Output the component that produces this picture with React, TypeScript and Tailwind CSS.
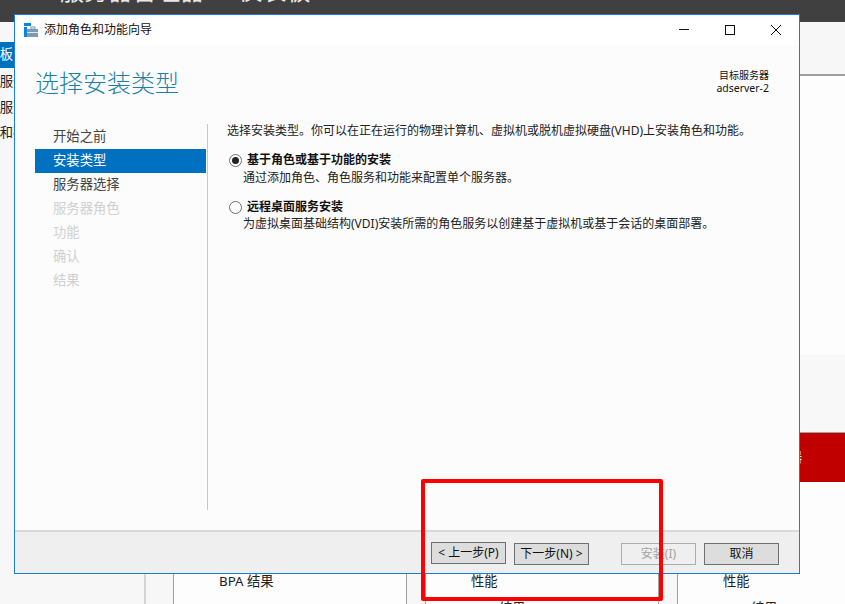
const font = "font-['Noto_Sans','Noto_Sans_CJK_SC',sans-serif]";

const steps = [
  { label: "开始之前", state: "done" },
  { label: "安装类型", state: "active" },
  { label: "服务器选择", state: "done" },
  { label: "服务器角色", state: "off" },
  { label: "功能", state: "off" },
  { label: "确认", state: "off" },
  { label: "结果", state: "off" },
];

function Radio({ checked }: { checked?: boolean }) {
  return (
    <span className="flex h-[13px] w-[13px] shrink-0 items-center justify-center rounded-full border border-[#6d6d6d] bg-white">
      {checked && <span className="h-[7px] w-[7px] rounded-full bg-[#222]" />}
    </span>
  );
}

function WizardButton({ label, disabled }: { label: string; disabled?: boolean }) {
  return (
    <button
      className={
        disabled
          ? "h-[22px] w-[75px] border border-[#adadad] bg-[#efefef] text-xs leading-none text-[#a3a3a3]"
          : "h-[22px] w-[75px] border border-[#707070] bg-[#dddddd] text-xs leading-none text-[#111]"
      }
    >
      {label}
    </button>
  );
}

function Tile({ title, rows }: { title: string; rows: string[] }) {
  return (
    <div className="h-[60px] w-[234px] shrink-0 border-x border-[#a0a0a0] bg-[#fdfdfd] pl-[45px] text-[13.33px] leading-5 text-[#222]">
      <div className="-mt-[2px]">{title}</div>
      {rows.map((r) => (
        <div key={r} className="mt-[7px]">
          {r}
        </div>
      ))}
    </div>
  );
}

function Background() {
  return (
    <div className="flex h-full flex-col">
      {/* Server Manager title bar, mostly scrolled off */}
      <div className="h-[22px] shrink-0 overflow-hidden bg-[#404040] pl-[60px] text-2xl leading-6 text-[#e8e8e8]">
        <div className="-mt-[21px] flex gap-[14px] whitespace-nowrap">
          <span>服务器管理器</span>
          <span>·</span>
          <span>仪表板</span>
        </div>
      </div>
      <div className="flex flex-1 overflow-hidden">
        {/* Left nav */}
        <div className="w-[146px] shrink-0 border-r-2 border-[#d4d4d4] bg-[#f7f7f7] pt-5 text-[13.33px] text-[#222]">
          <div className="flex h-[26px] items-center bg-[#0070c0] text-white">
            <span className="-ml-[27px] whitespace-nowrap">仪表板</span>
          </div>
          <div className="flex h-[27px] items-center"><span className="-ml-[27px] whitespace-nowrap">本地服务器</span></div>
          <div className="flex h-[25px] items-center"><span className="-ml-[27px] whitespace-nowrap">所有服务器</span></div>
          <div className="flex h-[25px] items-center"><span className="-ml-[27px] whitespace-nowrap">文件和存储服务</span></div>
        </div>
        {/* Dashboard body */}
        <div className="flex min-w-0 flex-1 flex-col bg-[#fdfdfd]">
          <div className="h-[54px] shrink-0 border-b-2 border-[#a0a0a0] bg-[#f7f7f7]" />
          <div className="h-[279px] shrink-0" />
          <div className="h-[78px] shrink-0 border-b border-[#a0a0a0] bg-[#f8f8f8]" />
          <div className="ml-[531px] flex h-[49px] shrink-0 items-center overflow-hidden bg-[#c00000] pl-[85px] text-[13.33px] text-white">
            <span className="whitespace-nowrap">服务器</span>
          </div>
          <div className="h-[91px] shrink-0" />
          <div className="flex flex-1 gap-[18px] bg-[#f7f7f7] pl-[27px]">
            <Tile title="BPA 结果" rows={[]} />
            <Tile title="性能" rows={["BPA 结果"]} />
            <Tile title="性能" rows={["BPA 结果"]} />
          </div>
        </div>
      </div>
    </div>
  );
}

function WizardWindow() {
  return (
    <div className="absolute left-[14px] top-[14px] flex h-[560px] w-[786px] flex-col border border-[#1a7fd4] bg-[#fcfcfc]">
      {/* Title bar */}
      <div className="flex h-[30px] shrink-0 items-center bg-white">
        <svg width="14" height="14" viewBox="0 0 14 14" className="ml-[9px] mr-[6px]">
          <rect x="0" y="0" width="7" height="3" fill="#0a84e0" />
          <rect x="0" y="4" width="3" height="10" fill="#0a84e0" />
          <rect x="3" y="6" width="11" height="8" fill="#7d9bb0" />
          <rect x="7" y="4" width="4" height="2" fill="none" stroke="#7d9bb0" />
          <rect x="3" y="9" width="11" height="1" fill="#dfe8ee" />
        </svg>
        <span className="text-xs text-[#111]">添加角色和功能向导</span>
        <div className="ml-auto flex items-center">
          <svg width="46" height="30" viewBox="0 0 46 30"><path d="M18 14.5H28" stroke="#111" /></svg>
          <svg width="46" height="30" viewBox="0 0 46 30"><rect x="18.5" y="10.5" width="9" height="9" fill="none" stroke="#111" /></svg>
          <svg width="46" height="30" viewBox="0 0 46 30"><path d="M18 10L28 20M28 10L18 20" stroke="#111" /></svg>
        </div>
      </div>

      {/* Header */}
      <div className="flex h-[80px] shrink-0 justify-between pl-5 pr-[30px]">
        <h1 className="mt-[22px] text-2xl font-light leading-8 text-[#1b7fa8]">选择安装类型</h1>
        <div className="mt-[24px] text-right text-[10px] leading-[13px] text-[#111]">
          <div>目标服务器</div>
          <div className="text-[10.5px]">adserver-2</div>
        </div>
      </div>

      {/* Steps and content */}
      <div className="flex flex-1 pl-5">
        <div className="w-[171px] shrink-0">
          {steps.map((s) => (
            <div
              key={s.label}
              className={
                s.state === "active"
                  ? "flex h-6 items-center bg-[#0070c0] pl-[18px] text-[13.33px] text-white"
                  : s.state === "done"
                    ? "flex h-6 items-center pl-[18px] text-[13.33px] text-[#444]"
                    : "flex h-6 items-center pl-[18px] text-[13.33px] text-[#d0d0d0]"
              }
            >
              {s.label}
            </div>
          ))}
        </div>
        <div className="-mt-px ml-px h-[386px] w-px bg-[#c8c8c8]" />
        <div className="-mt-px pl-[19px] text-xs text-[#222]">
          <p className="leading-[14px]">
            选择安装类型。你可以在正在运行的物理计算机、虚拟机或脱机虚拟硬盘(VHD)上安装角色和功能。
          </p>
          <div className="mt-[15px] flex items-center gap-[5px] pl-[2px] font-bold text-[#111]">
            <Radio checked />
            <span className="leading-[14px]">基于角色或基于功能的安装</span>
          </div>
          <p className="mt-1 pl-4 leading-[14px]">通过添加角色、角色服务和功能来配置单个服务器。</p>
          <div className="mt-[15px] flex items-center gap-[5px] pl-[2px] font-bold text-[#111]">
            <Radio />
            <span className="leading-[14px]">远程桌面服务安装</span>
          </div>
          <p className="mt-[3px] pl-4 leading-[14px]">
            为虚拟桌面基础结构(VDI)安装所需的角色服务以创建基于虚拟机或基于会话的桌面部署。
          </p>
        </div>
      </div>

      {/* Footer buttons */}
      <div className="flex h-[43px] shrink-0 items-center border-t-2 border-[#d9d9d9] bg-[#efefef] pl-[416px]">
        <WizardButton label="< 上一步(P)" />
        <div className="ml-2"><WizardButton label="下一步(N) >" /></div>
        <div className="ml-8"><WizardButton label="安装(I)" disabled /></div>
        <div className="ml-2"><WizardButton label="取消" /></div>
      </div>
    </div>
  );
}

export default function App() {
  return (
    <div className={`relative h-[604px] w-[845px] overflow-hidden ${font}`}>
      <Background />
      <WizardWindow />
      {/* Red annotation box drawn over the screenshot */}
      <div className="absolute left-[421px] top-[479px] h-[122px] w-[242px] rounded-[2px] border-4 border-[#ff0000]" />
    </div>
  );
}
